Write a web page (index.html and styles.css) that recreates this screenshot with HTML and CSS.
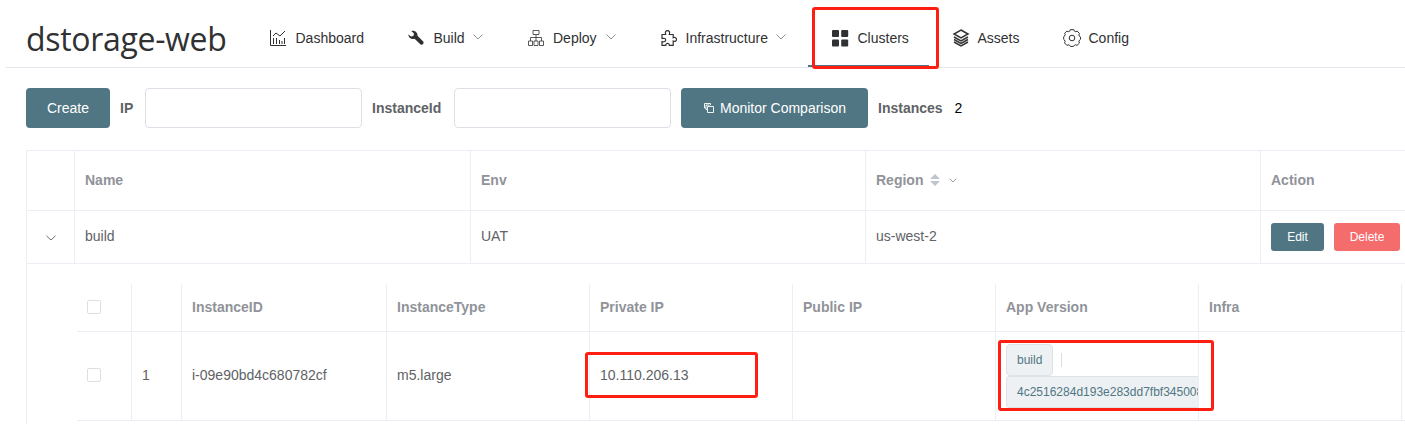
FILE: index.html
```html
<!DOCTYPE html>
<html lang="en">
<head>
<meta charset="utf-8">
<title>dstorage-web</title>
<link rel="stylesheet" href="styles.css">
</head>
<body>
<header class="header">
  <div class="brand">dstorage-web</div>
  <nav class="nav">
    <a class="nav-item dashboard"><svg class="icon" viewBox="0 0 16 16"><path d="M.5 0v15.500H16M3.500 14V8M6.500 14V8M9.500 14V10M12 14v-3M14.500 14V8M3 6l3-3 4 3 5-5" /></svg>Dashboard</a>
    <a class="nav-item build"><svg class="icon solid" viewBox="0 0 16 16"><path d="M3.300 1C6.500-.2 9.800 2.300 9.500 5.800L15 11.300c1.800 1.800-.8 4.700-2.700 2.900L6.600 8.800C3.600 9.600.2 7.600.4 4.400L3 6.600 5.400 5.900 6 3.500z" /></svg>Build<svg class="chevron" viewBox="0 0 10 6"><path d="M.5.5 5 5 9.500.5" /></svg></a>
    <a class="nav-item deploy"><svg class="icon thin" viewBox="0 0 16 16"><path d="M5 .5h6v4H5zM8 4.500V11M2.500 11V7.500h11V11M.5 11h4v4.500h-4zM6 11h4v4.500H6zM11.500 11h4v4.500h-4z" /></svg>Deploy<svg class="chevron" viewBox="0 0 10 6"><path d="M.5.5 5 5 9.500.5" /></svg></a>
    <a class="nav-item infra"><svg class="icon puzzle" viewBox="0 0 16 16"><path d="M1 4.500h3.700C3.800 2 4.800.6 6.500.6S9.200 2 8.300 4.500h3.900v3.300c2-.9 3.300 0 3.300 1.600s-1.300 2.500-3.300 1.600v4.300H8.300c.2-2.600-3.700-2.600-3.500 0H1v-3.700c2.300.6 3.700-.2 3.700-1.600S3.300 7.900 1 8.500z" /></svg>Infrastructure<svg class="chevron" viewBox="0 0 10 6"><path d="M.5.5 5 5 9.500.5" /></svg></a>
    <a class="nav-item clusters active"><svg class="icon solid" viewBox="0 0 16 16"><rect width="7" height="7" rx="1" /><rect x="9.200" width="7" height="7" rx="1" /><rect y="9.500" width="7" height="7" rx="1" /><rect x="9.200" y="9.500" width="7" height="7" rx="1" /></svg>Clusters<span class="mark mark-nav"></span></a>
    <a class="nav-item assets"><svg class="icon stack" viewBox="0 0 16 18"><path d="M8 1l7 4-7 4-7-4zM1 8l7 4 7-4M1 10.500l7 4 7-4M1 13l7 4 7-4" /></svg>Assets</a>
    <a class="nav-item config"><svg class="icon gear" viewBox="0 0 18 18"><path d="M7.200.7h3.600l.5 1.400 1.500.6 1.400-.6 2.300 2.500-.6 1.300.6 1.500 1 .6v2.300l-1 .8-.6 1.500.6 1.400-2.500 2.400-1.400-.6-1.400.6-.6 1H7.400l-.6-1-1.500-.6-1.400.6-2.400-2.500.6-1.400-.6-1.500-.8-.6V7.700l.9-.6.6-1.500-.6-1.300 2.300-2.200 1.400.6 1.500-.6z" /><circle cx="9" cy="9" r="2.800" /></svg>Config</a>
  </nav>
</header>
<main class="content">
  <div class="toolbar">
    <button class="btn create">Create</button>
    <label class="label ip">IP</label><input class="input" type="text">
    <label class="label instance">InstanceId</label><input class="input" type="text">
    <button class="btn monitor"><svg class="copy" viewBox="0 0 10 10"><path d="M3.500 3.500h6v6h-6zM5 3.500V2H2v4.500h1.500M2 5H.5V.5h6V2" /></svg>Monitor Comparison</button>
    <span class="label instances">Instances</span><span class="count">2</span>
  </div>
  <section class="table">
    <div class="row head">
      <div class="cell"></div><div class="cell">Name</div><div class="cell">Env</div>
      <div class="cell">Region<svg class="sort" viewBox="0 0 10 12"><path d="M0 5 5 0l5 5zM0 7h10l-5 5z" /></svg><svg class="filter" viewBox="0 0 8 5"><path d="M.8.800 4 4 7.200.8" /></svg></div>
      <div class="cell">Action</div>
    </div>
    <div class="row body">
      <div class="cell expand"><svg class="filter open" viewBox="0 0 10 6"><path d="M.5.800 5 5 9.500.8" /></svg></div><div class="cell">build</div><div class="cell">UAT</div><div class="cell">us-west-2</div>
      <div class="cell actions"><button class="btn small edit">Edit</button><button class="btn small danger">Delete</button></div>
    </div>
    <div class="subtable">
      <div class="subrow subhead">
        <div class="cell"><span class="check"></span></div><div class="cell"></div><div class="cell">InstanceID</div><div class="cell">InstanceType</div><div class="cell">Private IP</div><div class="cell">Public IP</div><div class="cell">App Version</div><div class="cell">Infra</div><div class="cell"></div>
      </div>
      <div class="subrow subbody">
        <div class="cell"><span class="check"></span></div><div class="cell">1</div><div class="cell">i-09e90bd4c680782cf</div><div class="cell">m5.large</div>
        <div class="cell marked">10.110.206.13<span class="mark mark-ip"></span></div><div class="cell"></div>
        <div class="cell marked version"><div class="tags"><span class="tag">build</span><span class="divider"></span><span class="tag hash">4c2516284d193e283dd7fbf345008</span></div><span class="mark mark-version"></span></div>
        <div class="cell"></div><div class="cell"></div>
      </div>
    </div>
  </section>
</main>
</body>
</html>
```

FILE: styles.css
```css
* { box-sizing: border-box; }
body {
  margin: 0;
  width: 1405px;
  height: 424px;
  overflow: hidden;
  background: #fff;
  color: #606266;
  font: 14px "Liberation Sans", Arial, sans-serif;
}
.header {
  display: flex;
  height: 68px;
  margin-left: 6px;
  padding-left: 20px;
  border-bottom: 1px solid #e4e7ed;
}
.brand {
  width: 244px;
  padding-top: 16px;
  color: #303133;
  font: 32px/46px "Open Sans", "Noto Sans", sans-serif;
  letter-spacing: -.32px;
  white-space: nowrap;
}
.nav { display: flex; height: 68px; }
.nav-item {
  position: relative;
  display: flex;
  align-items: center;
  gap: 9.5px;
  height: 68px;
  padding-top: 8px;
  color: #303133;
  white-space: nowrap;
}
.dashboard { width: 138px; }
.build { width: 120px; }
.build .chevron { margin-left: -1px; }
.deploy { width: 133px; gap: 9px; }
.infra { width: 147px; gap: 8.5px; }
.clusters { width: 121px; padding-left: 24px; }
.assets { width: 134px; padding-left: 24px; gap: 8.5px; }
.config { gap: 7.500px; }
.active::after {
  content: "";
  position: absolute;
  left: 0;
  right: 0;
  bottom: 1px;
  height: 2px;
  background: #507683;
}
.icon {
  flex: none;
  width: 16px;
  height: 16px;
  overflow: visible;
  fill: none;
  stroke: #303133;
  stroke-width: 1;
}
.icon.thin { stroke-width: .8; }
.icon.puzzle { stroke-width: 1.2; }
.icon.solid { fill: #303133; stroke: none; }
.icon.stack { height: 18px; stroke-width: 1.5; }
.icon.gear { width: 18px; height: 18px; }
.chevron {
  width: 10px;
  height: 6px;
  margin-top: -2px;
  fill: none;
  stroke: #909399;
  stroke-width: 1;
}
.mark {
  position: absolute;
  z-index: 2;
  border: 3px solid #ff1f12;
  border-radius: 3px;
}
.mark-nav { left: 4px; top: 7px; width: 127px; height: 62px; }
.mark-ip { left: -5px; top: 20px; width: 173px; height: 46px; }
.mark-version { left: 2px; top: 8px; width: 216px; height: 71px; }
.content { padding: 20px 0 0 26px; }
.toolbar { display: flex; align-items: center; height: 40px; }
.btn {
  display: flex;
  align-items: center;
  justify-content: center;
  height: 40px;
  padding: 0;
  border: 0;
  border-radius: 4px;
  background: #507683;
  color: #fff;
  font: 14px "Liberation Sans", Arial, sans-serif;
}
.create { width: 84px; }
.monitor { width: 187px; margin-left: 10px; padding-left: 1px; gap: 6px; }
.label { font-weight: 700; padding-left: 10px; }
.ip { width: 35px; }
.instance { width: 92px; }
.instances { width: 86.5px; }
.count { color: #000; }
.input {
  width: 217px;
  height: 40px;
  border: 1px solid #dcdfe6;
  border-radius: 4px;
}
.copy { width: 10px; height: 10px; fill: none; stroke: #fff; stroke-width: .9; }
.table {
  width: 1379px;
  height: 274px;
  margin-top: 22px;
  border: 1px solid #ebeef5;
  border-width: 1px 0 0 1px;
}
.row { display: grid; grid-template-columns: 48px 396px 395px 395px 144px; }
.head { height: 60px; color: #909399; font-weight: 700; }
.body { height: 53px; }
.cell {
  display: flex;
  align-items: center;
  min-width: 0;
  padding: 0 0 2px 10px;
  border-right: 1px solid #ebeef5;
  border-bottom: 1px solid #ebeef5;
  white-space: nowrap;
}
.cell:last-child { border-right: 0; }
.sort { width: 10px; height: 12px; margin-left: 7px; fill: #c0c4cc; }
.filter { width: 8px; height: 5px; margin: 2px 0 0 9px; fill: none; stroke: #909399; stroke-width: .9; }
.open { width: 10px; height: 6px; margin: 4px 0 0 9px; stroke: #606266; }
.actions { gap: 10px; padding-bottom: 0; }
.small { height: 28px; border-radius: 3px; font-size: 12px; }
.edit { width: 53px; }
.danger { width: 66px; background: #f56c6c; }
.subtable { margin: 20px 0 0 50px; }
.subrow { display: grid; grid-template-columns: 55px 50px 205px 203px 203px 203px 203px 203px 3px; }
.subhead { height: 48px; color: #909399; font-weight: 700; }
.subbody { height: 89px; }
.check { width: 14px; height: 14px; border: 1px solid #dcdfe6; border-radius: 2px; }
.marked { position: relative; }
.version { padding-bottom: 0; }
.tags { display: flex; flex-wrap: wrap; align-items: center; width: 192px; overflow: hidden; }
.tag {
  height: 32px;
  padding: 0 10px;
  border: 1px solid #dce4e6;
  border-radius: 4px;
  background: #edf1f3;
  color: #507683;
  font-size: 12px;
  line-height: 30px;
}
.divider { width: 1px; height: 14px; margin: 0 100px 0 8px; background: #dcdfe6; }
.hash {
  flex: none;
  width: 192px;
  padding-right: 0;
  border-right: 0;
  border-radius: 4px 0 0 4px;
  overflow: hidden;
}
```
